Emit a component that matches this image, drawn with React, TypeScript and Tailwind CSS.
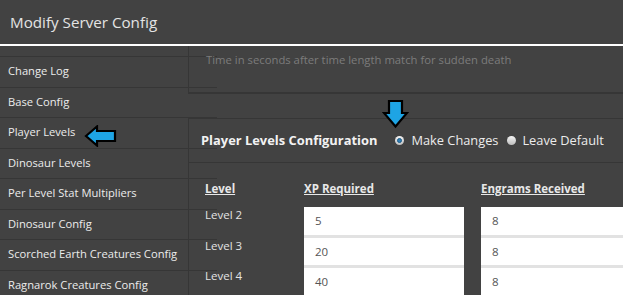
const sideItems = [
  "Change Log",
  "Base Config",
  "Player Levels",
  "Dinosaur Levels",
  "Per Level Stat Multipliers",
  "Dinosaur Config",
  "Scorched Earth Creatures Config",
  "Ragnarok Creatures Config",
];

const levels = [
  { label: "Level 2", xp: "5", engrams: "8" },
  { label: "Level 3", xp: "20", engrams: "8" },
  { label: "Level 4", xp: "40", engrams: "8" },
];

function LeftArrow() {
  return (
    <svg width="33" height="22" viewBox="0 0 33 22" className="ml-[9px] mt-[6px] shrink-0">
      <polygon
        points="2,11 13,1.5 13,6 31,6 31,16 13,16 13,20.5"
        fill="#1ea4e4"
        stroke="#000"
        strokeWidth="2.2"
        strokeLinejoin="miter"
      />
    </svg>
  );
}

function DownArrow() {
  return (
    <svg width="27" height="30" viewBox="0 0 27 30">
      <polygon
        points="13.5,27.5 2,14 7,14 7,2 20,2 20,14 25,14"
        fill="#1ea4e4"
        stroke="#000"
        strokeWidth="2.2"
        strokeLinejoin="miter"
      />
    </svg>
  );
}

function Radio({ checked }: { checked?: boolean }) {
  return (
    <span className="w-[9px] h-[9px] rounded-full bg-gradient-to-b from-[#f4f4f4] to-[#bdbdbd] flex items-center justify-center shrink-0">
      {checked && <span className="w-[5px] h-[5px] rounded-full bg-[#2f7fb5] border border-[#1d5a86]" />}
    </span>
  );
}

export default function App() {
  return (
    <div className="w-[623px] h-[295px] overflow-hidden bg-[#424242] font-['Open_Sans',sans-serif]">
      <header className="h-[46px] border-b-2 border-white flex items-center pl-[10px] text-[15.2px] text-[#e4e4e4]">
        Modify Server Config
      </header>

      <div className="flex">
        <nav className="w-[217px] shrink-0">
          <div className="h-[11px] border-b border-[#363636]" />
          {sideItems.map((item) => (
            <div
              key={item}
              className="h-[30.5px] border-b border-[#363636] flex items-center pl-[8px] text-[11.2px] text-[#ececec] whitespace-nowrap"
            >
              {item}
              {item === "Player Levels" && <LeftArrow />}
            </div>
          ))}
        </nav>

        <main className="-ml-[29px] flex-1 min-w-0 relative">
          <div className="h-[48px] border-l border-b-2 border-[#363636] pl-[17px] pt-[6px] text-[11.3px] text-[#7c7c7c] whitespace-nowrap">
            Time in seconds after time length match for sudden death
          </div>

          <div className="h-[24px]" />

          <div className="absolute left-[194px] top-[53px]">
            <DownArrow />
          </div>

          <div className="border-l border-t border-[#363636]">
            <div className="h-[44px] border-b border-[#363636] flex items-center pl-[12px] whitespace-nowrap">
              <span className="text-[12.9px] font-bold text-[#f2f2f2] mr-[18px] shrink-0">
                Player Levels Configuration
              </span>
              <label className="flex items-center gap-[7px] text-[12.8px] text-[#ececec] mr-[9px] shrink-0">
                <Radio checked />
                Make Changes
              </label>
              <label className="flex items-center gap-[6px] text-[12.8px] text-[#ececec] shrink-0">
                <Radio />
                Leave Default
              </label>
            </div>

            <div className="pl-[16px] grid grid-cols-[82px_160px_1fr] gap-x-[17px]">
              <div className="pt-[18px] pb-[10px] leading-4 text-[11.5px] font-bold underline text-[#e8e8e8]">
                Level
              </div>
              <div className="pt-[18px] pb-[10px] leading-4 text-[11.5px] font-bold underline text-[#e8e8e8]">
                XP Required
              </div>
              <div className="pt-[18px] pb-[10px] leading-4 text-[11.5px] font-bold underline text-[#e8e8e8] whitespace-nowrap">
                Engrams Received
              </div>

              {levels.map((row) => (
                <div key={row.label} className="contents">
                  <div className="h-[30.5px] text-[11.5px] leading-4 text-[#e4e4e4]">{row.label}</div>
                  <div className="h-[30.5px] bg-white border-b-[3px] border-[#e2e2e2] flex items-center pl-[11px] text-[11.5px] text-[#555]">
                    {row.xp}
                  </div>
                  <div className="h-[30.5px] bg-white border-b-[3px] border-[#e2e2e2] flex items-center pl-[11px] text-[11.5px] text-[#555]">
                    {row.engrams}
                  </div>
                </div>
              ))}
            </div>
          </div>
        </main>
      </div>
    </div>
  );
}
